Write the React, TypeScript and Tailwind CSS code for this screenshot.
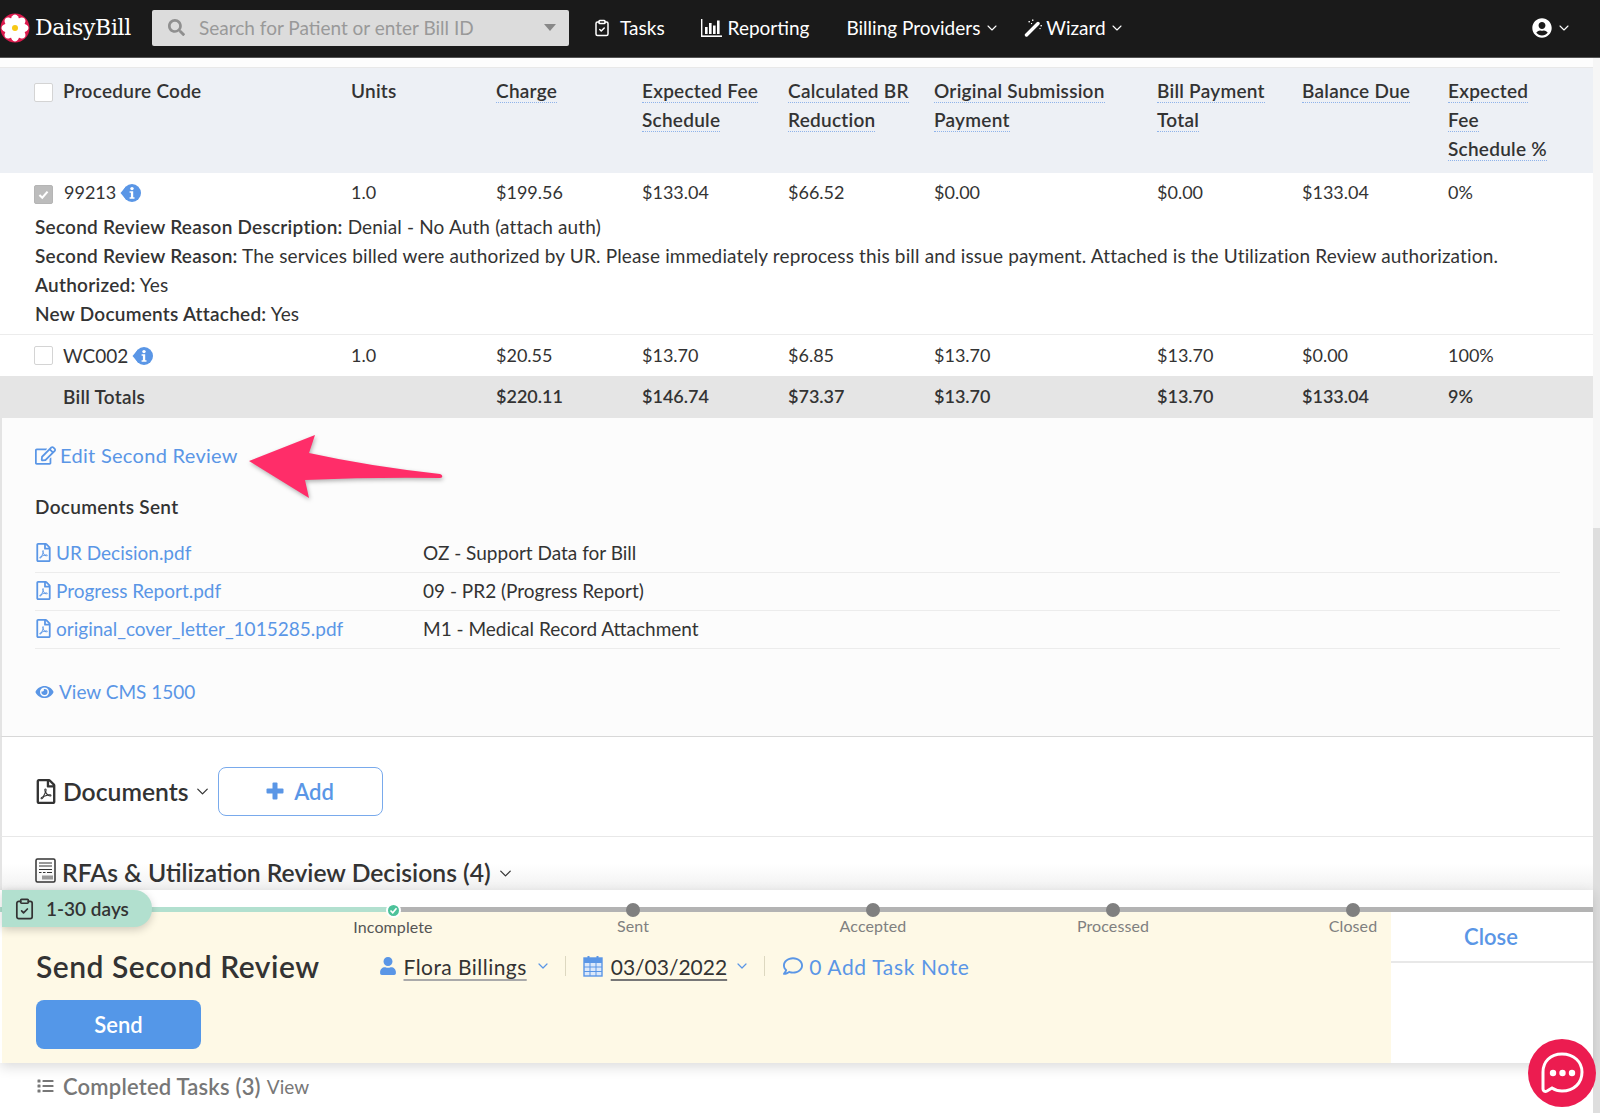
import React from "react";
import { ChevronDown, ClipboardCheck } from "lucide-react";
import {
  FaEye,
  FaList,
  FaRegComment,
  FaRegEdit,
  FaRegFilePdf,
  FaSearch,
  FaUser,
  FaUserCircle,
} from "react-icons/fa";

const GRID = "grid grid-cols-[29px_288px_145px_146px_146px_146px_223px_145px_146px_1fr] pl-[34px]";

const headers = [
  ["Charge"],
  ["Expected Fee", "Schedule"],
  ["Calculated BR", "Reduction"],
  ["Original Submission", "Payment"],
  ["Bill Payment", "Total"],
  ["Balance Due"],
  ["Expected", "Fee", "Schedule %"],
];

const documents = [
  ["UR Decision.pdf", "OZ - Support Data for Bill"],
  ["Progress Report.pdf", "09 - PR2 (Progress Report)"],
  ["original_cover_letter_1015285.pdf", "M1 - Medical Record Attachment"],
];

const milestones = ["Incomplete", "Sent", "Accepted", "Processed", "Closed"];

const Logo = () => (
  <svg viewBox="0 0 30 32" className="w-[30px] h-[32px]">
    <circle cx="15" cy="16" r="14.5" fill="#dc1a4d" />
    {[0, 45, 90, 135, 180, 225, 270, 315].map((a) => (
      <ellipse key={a} cx="15" cy="8.5" rx="4.2" ry="6" fill="#fff" transform={`rotate(${a} 15 16)`} />
    ))}
    <circle cx="15" cy="16" r="3" fill="#f7c814" />
  </svg>
);

const InfoIcon = () => (
  <svg viewBox="0 0 22 20" className="w-[22px] h-[20px]">
    <path d="M0.5 10 L6 3.5 L6 16.5 Z" fill="#5a96e6" />
    <circle cx="12" cy="10" r="9" fill="#5a96e6" />
    <circle cx="12" cy="5.6" r="1.7" fill="#fff" />
    <path d="M9.6 8.2h3.6v6h1.3v1.6H9.6v-1.6h1.3v-4.4H9.6z" fill="#fff" />
  </svg>
);

const Checkbox = ({ checked }: { checked?: boolean }) => (
  <div
    className={`w-[19px] h-[19px] rounded-[2px] border flex items-center justify-center ${
      checked ? "bg-[#bcbcbc] border-[#b5b5b5]" : "bg-white border-[#d4d4d4]"
    }`}
  >
    {checked && (
      <svg viewBox="0 0 16 16" className="w-[13px] h-[13px]">
        <path d="M3 8.5 L6.5 12 L13 4.5" fill="none" stroke="#fff" strokeWidth="2.6" />
      </svg>
    )}
  </div>
);

const ReportingIcon = () => (
  <svg viewBox="0 0 21 18" className="w-[21px] h-[18px]" fill="#fff">
    <rect x="0" y="0" width="1.4" height="18" />
    <rect x="0" y="16.4" width="21" height="1.6" />
    <rect x="4" y="8" width="2.6" height="7" />
    <rect x="8" y="4" width="2.6" height="11" />
    <rect x="12" y="6.5" width="2.6" height="8.5" />
    <rect x="16" y="1.5" width="2.6" height="13.5" />
  </svg>
);

const WandIcon = () => (
  <svg viewBox="0 0 18 18" className="w-[18px] h-[18px]" fill="#fff">
    <path d="M2.500 16 L14 4.500" stroke="#fff" strokeWidth="3.400" strokeLinecap="round" />
    <rect x="4.500" y="2" width="1.400" height="1.400" />
    <rect x="8" y="0.500" width="1.400" height="1.400" />
    <rect x="7" y="4" width="1.100" height="1.100" />
    <rect x="16.500" y="6" width="1.400" height="1.400" />
    <rect x="15.500" y="9" width="1.100" height="1.100" />
  </svg>
);

const PlusIcon = () => (
  <svg viewBox="0 0 18 18" className="w-[18px] h-[18px]" fill="#5a96e6">
    <rect x="6.500" y="0.500" width="5" height="17" rx="1" />
    <rect x="0.500" y="6.500" width="17" height="5" rx="1" />
  </svg>
);

const RfaIcon = () => (
  <svg viewBox="0 0 21 25" className="w-[21px] h-[25px]">
    <rect x="1" y="1" width="19" height="23" rx="1.5" fill="none" stroke="#333" strokeWidth="1.5" />
    <path d="M4 5h13M4 8h13M4 11.500h13M4 14.500h2.500M8 14.500h2.500M12 14.500h5" stroke="#333" strokeWidth="1.2" />
    <rect x="7" y="17.500" width="11" height="4" fill="#999" />
  </svg>
);

const CalendarIcon = () => (
  <svg viewBox="0 0 20 22" className="w-[20px] h-[22px]">
    <rect x="1" y="3" width="18" height="18" fill="#dbe8fa" stroke="#5a96e6" strokeWidth="1.4" />
    <rect x="1" y="3" width="18" height="5" fill="#5a96e6" />
    <path d="M5.500 1v4M14.500 1v4" stroke="#5a96e6" strokeWidth="2" />
    <path d="M1 12h18M1 16.500h18M7 8v13M13 8v13" stroke="#5a96e6" strokeWidth="1" />
  </svg>
);

const ChatIcon = () => (
  <svg viewBox="0 0 68 68" className="w-[68px] h-[68px]">
    <circle cx="34" cy="34" r="34" fill="#ec1c50" />
    <path
      d="M34 15 C22 15 15 23 15 33 V50 C15 52 17 53 19 52 L24 49 C27 51 30 52 34 52 C46 52 54 44 54 33 C54 23 46 15 34 15 Z"
      fill="none"
      stroke="#fff"
      strokeWidth="3"
    />
    <circle cx="25" cy="34" r="3.200" fill="#fff" />
    <circle cx="34.500" cy="34" r="3.200" fill="#fff" />
    <circle cx="44" cy="34" r="3.200" fill="#fff" />
  </svg>
);

export default function App() {
  return (
    <div className="relative w-[1600px] h-[1113px] overflow-hidden bg-white text-[18px] leading-[29px] text-[#333] font-['Lato','Open_Sans',sans-serif]">
      {/* navbar */}
      <div className="h-[58px] pb-[2px] bg-[#1a1a1a] border-b border-[#555] flex items-center text-white text-[19px]">
        <Logo />
        <span className="ml-[5px] w-[112px] text-[22px] font-['DejaVu_Serif',serif] tracking-[-0.3px]">DaisyBill</span>
        <div className="ml-[5px] w-[417px] h-[36px] bg-[#dcdcdc] rounded-[2px] flex items-center pl-[16px] pr-[13px] text-[#999]">
          <FaSearch className="w-[17px] h-[17px] text-[#8f8f8f]" />
          <span className="ml-[14px]">Search for Patient or enter Bill ID</span>
          <span className="ml-auto w-0 h-0 border-x-[6px] border-x-transparent border-t-[7px] border-t-[#888]" />
        </div>
        <ClipboardCheck className="ml-[24px] w-[18px] h-[20px]" strokeWidth={2} />
        <span className="ml-[9px]">Tasks</span>
        <div className="ml-[36px]">
          <ReportingIcon />
        </div>
        <span className="ml-[6px]">Reporting</span>
        <span className="ml-[37px]">Billing Providers</span>
        <ChevronDown className="ml-[4px] w-[16px] h-[16px]" strokeWidth={1.6} />
        <div className="ml-[24px]">
          <WandIcon />
        </div>
        <span className="ml-[4px]">Wizard</span>
        <ChevronDown className="ml-[3px] w-[16px] h-[16px]" strokeWidth={1.6} />
        <FaUserCircle className="ml-auto w-[20px] h-[20px]" />
        <ChevronDown className="ml-[4px] mr-[28px] w-[16px] h-[16px]" strokeWidth={1.6} />
      </div>

      <div className="flex h-[1055px]">
        <div className="w-[1593px] flex flex-col">
          {/* table */}
          <div className="h-[10px] bg-[#fdfdfd] border-b border-[#e8e8e8]" />
          <div className={`${GRID} bg-[#edf0f5] h-[105px] pt-[8px] font-semibold text-[19px] tracking-[0.25px]`}>
            <div className="pt-[7px]">
              <Checkbox />
            </div>
            <div>Procedure Code</div>
            <div>Units</div>
            {headers.map((lines) => (
              <div key={lines[0]}>
                {lines.map((l) => (
                  <div key={l} className="h-[29px]">
                    <span className="inline-block h-[27px] border-b border-dotted border-[#8fb3ea]">{l}</span>
                  </div>
                ))}
              </div>
            ))}
          </div>

          <div className="h-[162px] pt-[5px] border-b border-[#ececec]">
            <div className={GRID}>
              <div className="pt-[7px]">
                <Checkbox checked />
              </div>
              <div className="flex items-center gap-[4px] pl-[1px]">
                99213 <InfoIcon />
              </div>
              <div>1.0</div>
              <div>$199.56</div>
              <div>$133.04</div>
              <div>$66.52</div>
              <div>$0.00</div>
              <div>$0.00</div>
              <div>$133.04</div>
              <div>0%</div>
            </div>
            <div className="pl-[35px] pt-[5px] text-[19px] tracking-[0.15px]">
              <div>
                <span className="font-semibold tracking-[0.25px]">Second Review Reason Description:</span> Denial - No Auth (attach auth)
              </div>
              <div>
                <span className="font-semibold tracking-[0.25px]">Second Review Reason:</span> The services billed were authorized by UR.
                Please immediately reprocess this bill and issue payment. Attached is the Utilization Review authorization.
              </div>
              <div>
                <span className="font-semibold tracking-[0.25px]">Authorized:</span> Yes
              </div>
              <div>
                <span className="font-semibold tracking-[0.25px]">New Documents Attached:</span> Yes
              </div>
            </div>
          </div>

          <div className={`${GRID} h-[41px] items-center`}>
            <Checkbox />
            <div className="flex items-center gap-[4px] text-[19px]">
              WC002 <InfoIcon />
            </div>
            <div>1.0</div>
            <div>$20.55</div>
            <div>$13.70</div>
            <div>$6.85</div>
            <div>$13.70</div>
            <div>$13.70</div>
            <div>$0.00</div>
            <div>100%</div>
          </div>

          <div className={`${GRID} h-[42px] pb-[2px] items-center bg-[#e5e5e5] font-semibold`}>
            <div />
            <div className="text-[19px] tracking-[0.25px]">Bill Totals</div>
            <div />
            <div>$220.11</div>
            <div>$146.74</div>
            <div>$73.37</div>
            <div>$13.70</div>
            <div>$13.70</div>
            <div>$133.04</div>
            <div>9%</div>
          </div>

          {/* second review */}
          <div className="h-[319px] bg-[#fcfcfc] border-l-2 border-[#e4e4e4] border-b border-b-[#d8d8d8] pl-[33px] pt-[23px] text-[19px]">
            <div className="flex items-center text-[20px] tracking-[0.3px] text-[#5a96e6]">
              <FaRegEdit className="w-[21px] h-[19px]" />
              <span className="ml-[4px]">Edit Second Review</span>
            </div>
            <div className="mt-[22px] font-semibold tracking-[0.3px]">Documents Sent</div>
            <div className="mt-[14px] w-[1525px]">
              {documents.map(([name, type]) => (
                <div key={name} className="h-[38px] flex items-center pb-[2px] border-b border-[#ececec]">
                  <div className="w-[388px] flex items-center text-[#5a96e6]">
                    <FaRegFilePdf className="w-[17px] h-[19px]" />
                    <span className="ml-[4px]">{name}</span>
                  </div>
                  <span>{type}</span>
                </div>
              ))}
            </div>
            <div className="mt-[28px] flex items-center text-[#5a96e6]">
              <FaEye className="w-[19px] h-[16px]" />
              <span className="ml-[5px]">View CMS 1500</span>
            </div>
          </div>

          {/* documents */}
          <div className="h-[100px] pt-[9px] bg-white border-b border-[#e8e8e8] border-l-2 border-l-[#e4e4e4] flex items-center pl-[33px]">
            <FaRegFilePdf className="w-[22px] h-[25px]" />
            <span className="ml-[6px] text-[24.7px] font-semibold">Documents</span>
            <ChevronDown className="ml-[4px] w-[19px] h-[19px]" strokeWidth={1.6} />
            <div className="ml-[6px] w-[165px] h-[49px] rounded-[8px] border border-[#79aaec] flex items-center justify-center gap-[10px] text-[22px] font-semibold text-[#5a96e6]">
              <PlusIcon />
              Add
            </div>
          </div>

          <div className="h-[53px] bg-gradient-to-b from-white from-50% to-[#f1f1f1] border-l-2 border-l-[#e4e4e4] flex items-start pt-[21px] pl-[33px]">
            <RfaIcon />
            <span className="ml-[6px] text-[24.7px] font-semibold">RFAs &amp; Utilization Review Decisions (4)</span>
            <ChevronDown className="ml-[5px] mt-[6px] w-[19px] h-[19px]" strokeWidth={1.6} />
          </div>

          {/* task panel */}
          <div className="relative h-[173px] shadow-[0_4px_12px_rgba(0,0,0,0.14)] flex">
            <div className="w-[1389px] mt-[20px] ml-[2px] bg-[#fef9e6]">
              <div className="pl-[271px] flex -mt-[7px]">
                {milestones.map((m, i) => (
                  <div key={m} className="relative z-10 w-[240px] shrink-0 flex flex-col items-center">
                    {i === 0 ? (
                      <div className="w-[15px] h-[15px] rounded-full bg-[#4dc29a] border-2 border-white flex items-center justify-center">
                        <svg viewBox="0 0 12 12" className="w-[9px] h-[9px]">
                          <path d="M2 6 L5 9 L10 3" fill="none" stroke="#fff" strokeWidth="2.200" />
                        </svg>
                      </div>
                    ) : (
                      <div className="w-[14px] h-[14px] rounded-full bg-[#808080]" />
                    )}
                    <span className={`-mt-[1px] text-[16px] tracking-[0.1px] leading-[20px] ${i === 0 ? "text-[#555]" : "text-[#808080]"}`}>{m}</span>
                  </div>
                ))}
              </div>
              <div className="pl-[34px] mt-[9px] flex items-center">
                <span className="text-[30px] tracking-[0.5px] font-semibold leading-[40px]">Send Second Review</span>
                <FaUser className="ml-[60px] w-[16px] h-[18px] text-[#5a96e6]" />
                <span className="ml-[8px] text-[21px] tracking-[0.45px] underline decoration-[#aaa] underline-offset-4">Flora Billings</span>
                <ChevronDown className="ml-[8px] w-[16px] h-[16px] text-[#5a96e6]" strokeWidth={1.8} />
                <div className="ml-[14px] w-px h-[20px] bg-[#ddd8c0]" />
                <div className="ml-[17px]">
                  <CalendarIcon />
                </div>
                <span className="ml-[8px] text-[21px] underline decoration-[#777] underline-offset-4">03/03/2022</span>
                <ChevronDown className="ml-[7px] w-[16px] h-[16px] text-[#5a96e6]" strokeWidth={1.8} />
                <div className="ml-[14px] w-px h-[20px] bg-[#ddd8c0]" />
                <FaRegComment className="ml-[17px] w-[22px] h-[20px] text-[#5a96e6]" />
                <span className="ml-[5px] text-[21px] tracking-[0.65px] text-[#5a96e6]">0 Add Task Note</span>
              </div>
              <div className="ml-[34px] mt-[14px] w-[165px] h-[49px] rounded-[8px] bg-[#5497e8] flex items-center justify-center text-[22px] font-semibold text-white">
                Send
              </div>
            </div>
            <div className="flex-1 mt-[22px]">
              <div className="h-[51px] border-b-2 border-[#e8e8e8] flex items-center justify-center pr-[2px] text-[22px] font-semibold text-[#5a96e6]">
                Close
              </div>
            </div>
            {/* progress track */}
            <div className="absolute left-0 right-0 top-[17px] h-[5px] flex">
              <div className="w-[393px] bg-[#b2e0cf]" />
              <div className="flex-1 bg-[#b3b3b3]" />
            </div>
            <div className="absolute left-[2px] top-0 w-[150px] h-[37px] rounded-r-[18px] bg-[#b2e0cf] shadow-[0_3px_8px_rgba(0,0,0,0.18)] flex items-center pl-[11px] font-semibold text-[19px]">
              <ClipboardCheck className="w-[23px] h-[26px]" strokeWidth={1.8} />
              <span className="ml-[10px]">1-30 days</span>
            </div>
          </div>

          <div className="h-[46px] shrink-0 flex items-center pl-[36px] text-[#777]">
            <FaList className="w-[19px] h-[16px]" />
            <span className="ml-[8px] text-[22px] tracking-[0.2px] font-semibold">Completed Tasks (3)</span>
            <span className="ml-[6px] text-[19px]">View</span>
          </div>
        </div>

        {/* scrollbar */}
        <div className="w-[7px] bg-[#f6f6f6] pt-[470px]">
          <div className="h-full bg-[#dedede]" />
        </div>
      </div>

      {/* annotation arrow */}
      <svg viewBox="0 0 210 80" className="absolute left-[243px] top-[428px] w-[210px] h-[80px] drop-shadow-[1px_2px_2px_rgba(0,0,0,0.3)]">
        <path
          d="M6 33 L72 7 L66 25 Q125 38 197 46 C200 47 200 50 197 50 Q130 49 62 52 L66 70 Z"
          fill="#ff2d69"
        />
      </svg>

      <div className="absolute left-[1528px] top-[1039px]">
        <ChatIcon />
      </div>
    </div>
  );
}
